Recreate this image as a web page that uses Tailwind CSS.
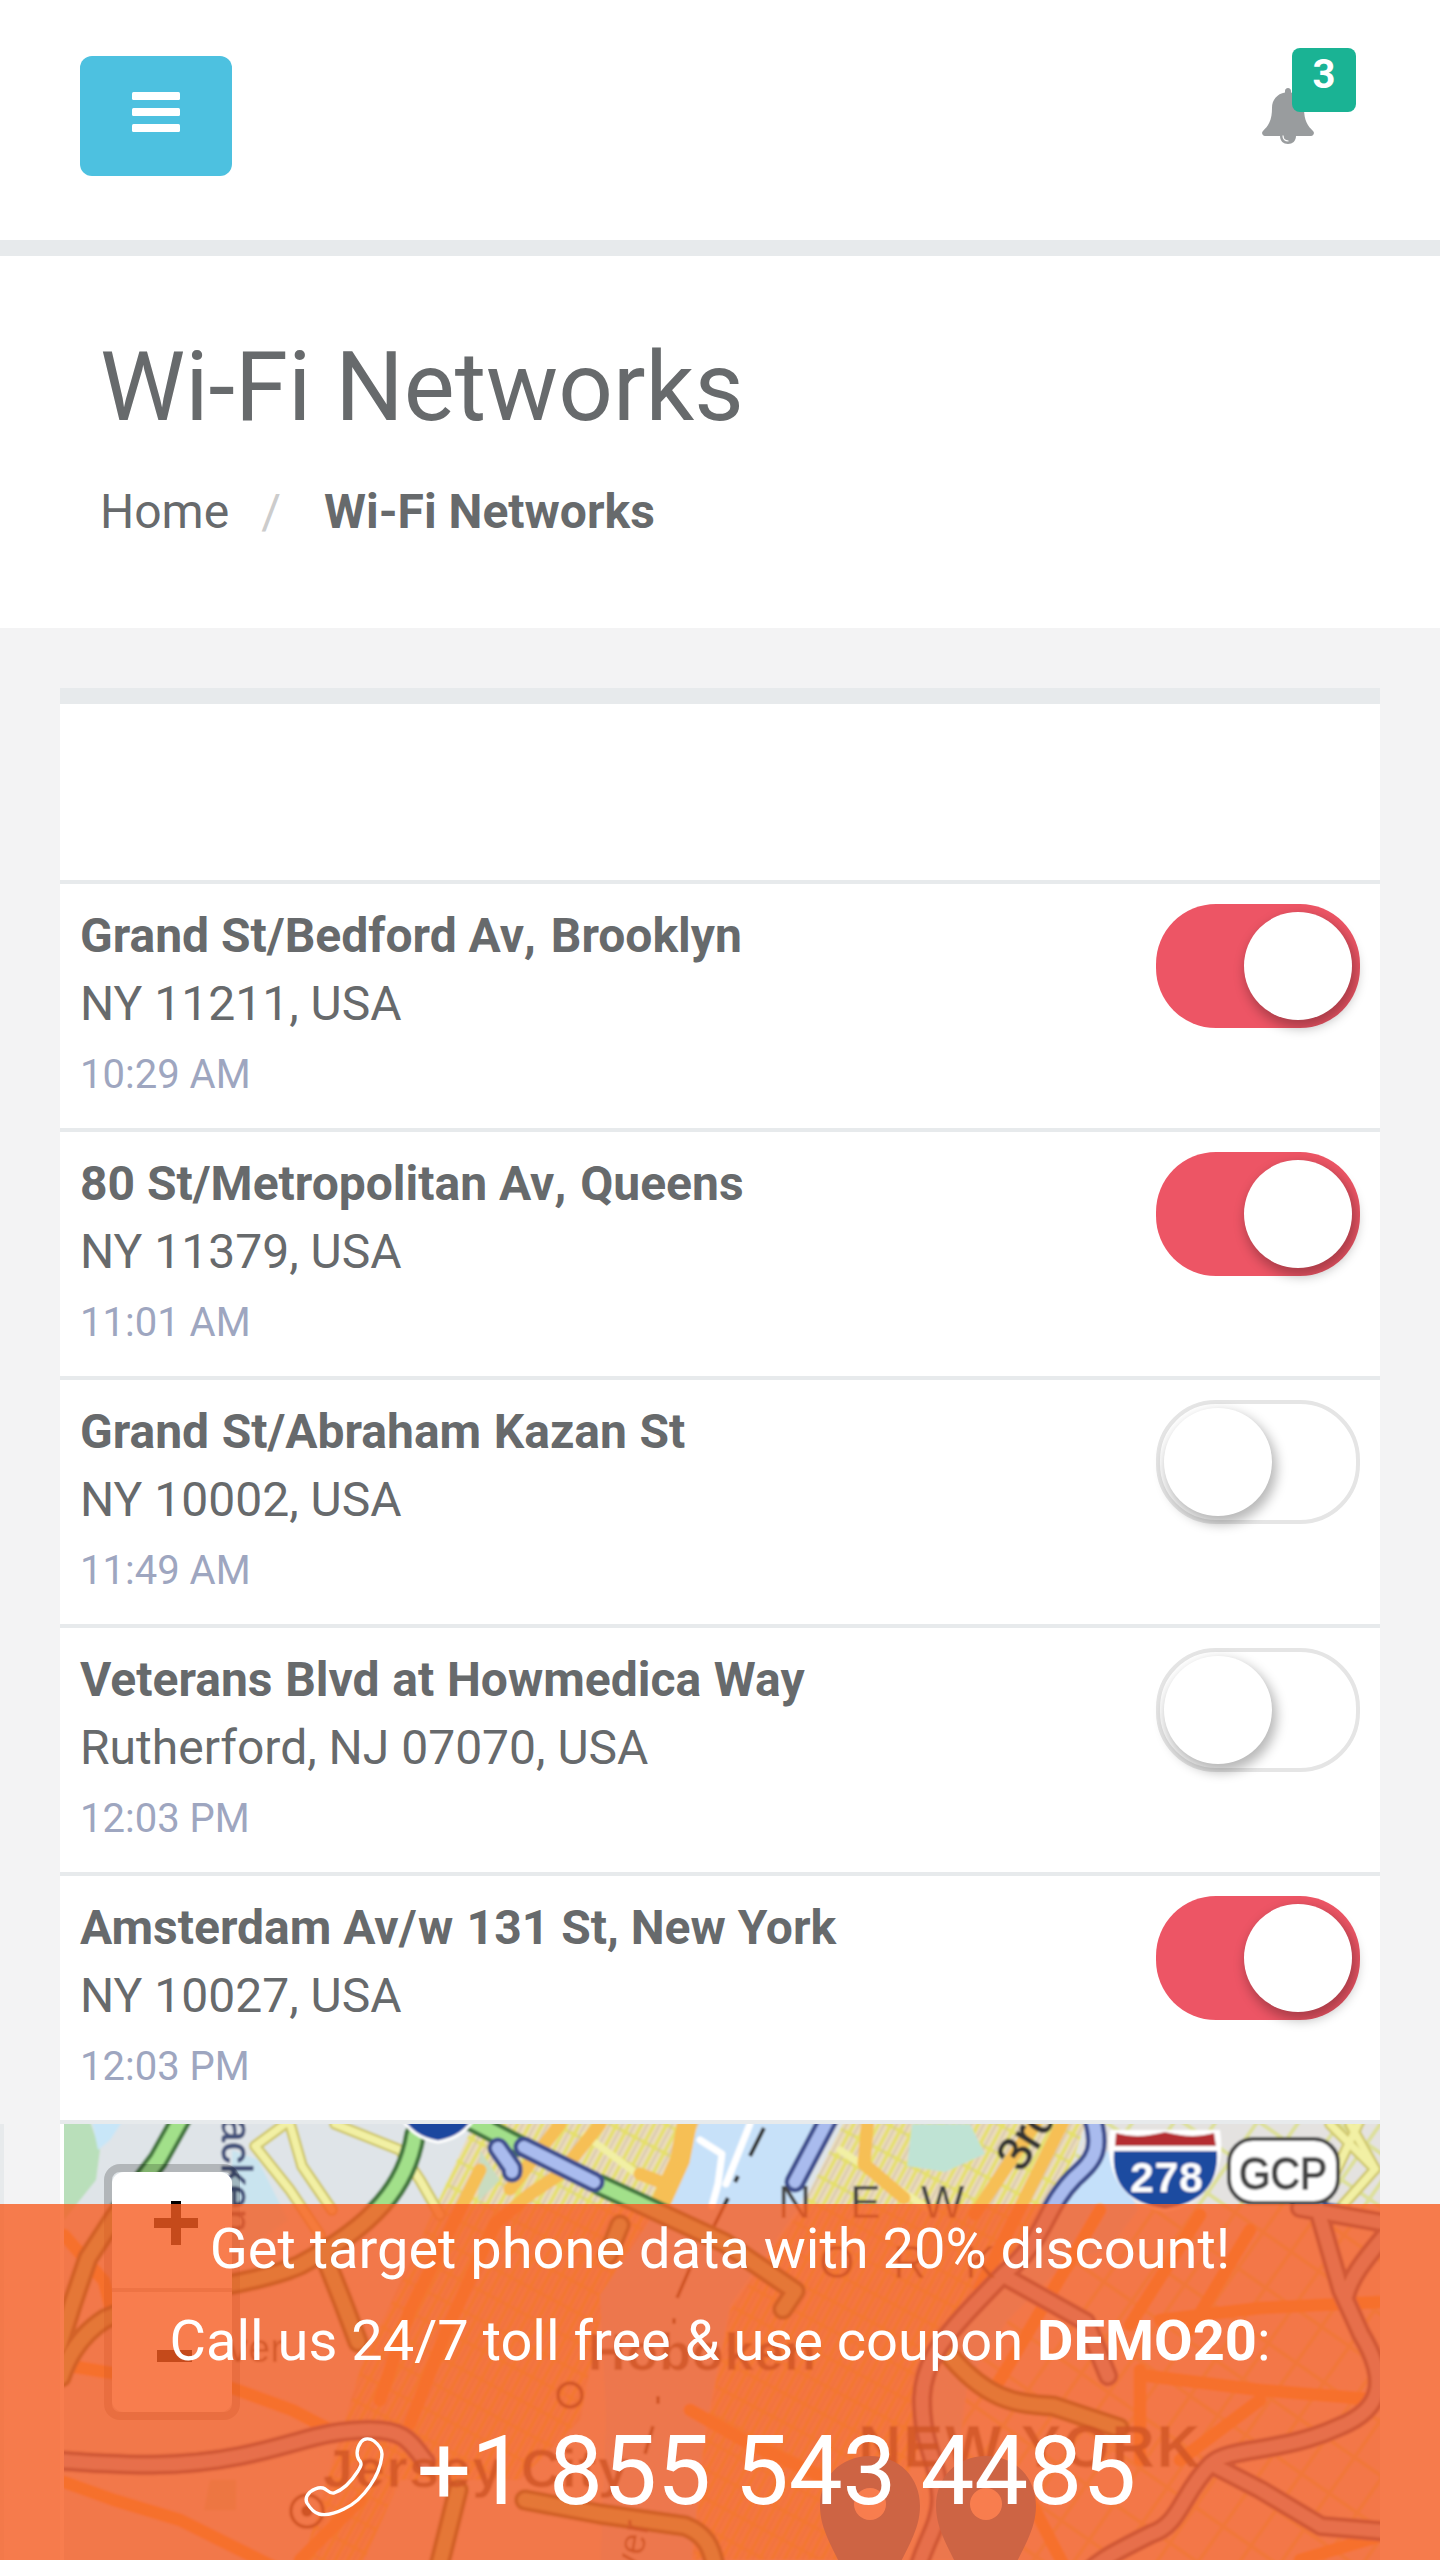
<!DOCTYPE html>
<html lang="en">
<head>
    <meta charset="UTF-8">
    <meta name="viewport" content="width=device-width, initial-scale=1.0">
    <title>Wi-Fi Networks</title>
    <script src="https://cdn.jsdelivr.net/npm/@tailwindcss/browser@4"></script>
</head>
<body class="h-[2560px] overflow-hidden bg-[#f3f3f4] font-[Roboto,sans-serif] text-[48px] leading-[68px] text-[#676a6c]">

    <nav class="flex h-64 items-start justify-between border-b-16 border-[#e7eaec] bg-white pl-20 pr-[84px]">
        <button type="button" aria-label="Menu" class="mt-14 flex h-[120px] w-[152px] justify-center rounded-xl bg-[#4dc1e0] pt-9">
            <svg class="h-10 w-12" viewBox="0 0 48 40" fill="#fff">
                <rect width="48" height="8" rx="1.5" />
                <rect y="16" width="48" height="8" rx="1.5" />
                <rect y="32" width="48" height="8" rx="1.5" />
            </svg>
        </button>
        <a href="#" class="relative mt-12 block h-24 w-[94px]">
            <svg class="mt-10 h-14 w-[52px]" viewBox="0 0 52 56">
                <path fill="#999c9e" d="M26 0c-2 0-3.200 1.500-3 3.600v1C15 6 10 12 10 20c0 13-4 18-9 23-2 2-.500 5 2 5h15c0 5 3.500 8 8 8s8-3 8-8h15c2.500 0 4-3 2-5-5-5-9-10-9-23 0-8-5-14-13-15.400v-1C29.200 1.500 28 0 26 0z" />
                <path fill="none" stroke="#fff" stroke-width="1.200" d="M21 47.500c0 3.500 2 5.500 5.500 5.500" />
            </svg>
            <span class="absolute right-0 top-0 flex h-16 w-16 justify-center rounded-lg bg-[#1ab394] text-[40px] font-bold leading-[54px] text-white">3</span>
        </a>
    </nav>

    <div class="h-[372px] bg-white px-[100px] pt-[78px]">
        <h1 class="text-[96px] leading-[106px]">Wi-Fi Networks</h1>
        <ol class="mt-[38px] flex">
            <li><a href="#">Home</a></li>
            <li class="flex"><span class="ml-[32px] mr-[43px] text-[#ccc]">/</span><strong class="font-bold">Wi-Fi Networks</strong></li>
        </ol>
    </div>

    <div class="mx-[60px] mt-[60px] border-t-16 border-[#e7eaec] bg-white">
        <div class="h-44"></div>
        <ul>
            <li class="flex h-[248px] justify-between border-t-4 border-[#e7eaec] px-5 pt-[18px]">
                <div>
                    <strong class="block font-bold">Grand St/Bedford Av<span class="tracking-[1.5px]">, </span>Brooklyn</strong>
                    <span class="block">NY 11211, USA</span>
                    <small class="block pt-[3px] text-[40px] text-[#9ea6c0]">10:29 AM</small>
                </div>
                <span class="mt-0.5 flex h-[124px] w-[204px] justify-end rounded-[60px] bg-[#ed5565] p-2"><i class="h-[108px] w-[108px] rounded-full bg-white shadow-[3px_6px_12px_2px_rgba(0,0,0,0.28)]"></i></span>
            </li>
            <li class="flex h-[248px] justify-between border-t-4 border-[#e7eaec] px-5 pt-[18px]">
                <div>
                    <strong class="block font-bold">80 St/Metropolitan Av<span class="tracking-[1px]">, </span>Queens</strong>
                    <span class="block">NY 11379, USA</span>
                    <small class="block pt-[3px] text-[40px] text-[#9ea6c0]">11:01 AM</small>
                </div>
                <span class="mt-0.5 flex h-[124px] w-[204px] justify-end rounded-[60px] bg-[#ed5565] p-2"><i class="h-[108px] w-[108px] rounded-full bg-white shadow-[3px_6px_12px_2px_rgba(0,0,0,0.28)]"></i></span>
            </li>
            <li class="flex h-[248px] justify-between border-t-4 border-[#e7eaec] px-5 pt-[18px]">
                <div>
                    <strong class="block font-bold [word-spacing:0.6px]">Grand St/Abraham Kazan St</strong>
                    <span class="block">NY 10002, USA</span>
                    <small class="block pt-[3px] text-[40px] text-[#9ea6c0]">11:49 AM</small>
                </div>
                <span class="mt-0.5 flex h-[124px] w-[204px] rounded-[60px] border-4 border-[#e5e5e5] bg-white p-1"><i class="h-[108px] w-[108px] rounded-full bg-white shadow-[3px_6px_12px_2px_rgba(0,0,0,0.28)]"></i></span>
            </li>
            <li class="flex h-[248px] justify-between border-t-4 border-[#e7eaec] px-5 pt-[18px]">
                <div>
                    <strong class="block font-bold [word-spacing:0.8px]">Veterans Blvd at Howmedica Way</strong>
                    <span class="block">Rutherford, NJ 07070, USA</span>
                    <small class="block pt-[3px] text-[40px] text-[#9ea6c0]">12:03 PM</small>
                </div>
                <span class="mt-0.5 flex h-[124px] w-[204px] rounded-[60px] border-4 border-[#e5e5e5] bg-white p-1"><i class="h-[108px] w-[108px] rounded-full bg-white shadow-[3px_6px_12px_2px_rgba(0,0,0,0.28)]"></i></span>
            </li>
            <li class="flex h-[252px] justify-between border-y-4 border-[#e7eaec] px-5 pt-[18px]">
                <div>
                    <strong class="block font-bold">Amsterdam Av<span class="tracking-[1.5px]">/w</span> 131 St, New York</strong>
                    <span class="block">NY 10027, USA</span>
                    <small class="block pt-[3px] text-[40px] text-[#9ea6c0]">12:03 PM</small>
                </div>
                <span class="mt-0.5 flex h-[124px] w-[204px] justify-end rounded-[60px] bg-[#ed5565] p-2"><i class="h-[108px] w-[108px] rounded-full bg-white shadow-[3px_6px_12px_2px_rgba(0,0,0,0.28)]"></i></span>
            </li>
        </ul>
    </div>

    <div class="flex h-[436px] border-l-4 border-[#e7eaec] pl-14 pr-[60px]">
        <div class="relative w-[1320px] bg-white pl-1">
            <!-- map, user units are page pixels -->
            <svg class="h-[436px] w-[1316px]" viewBox="64 2124 1316 436" font-family="Liberation Sans, sans-serif">
                <defs>
                    <pattern id="blocks" width="11" height="26" patternUnits="userSpaceOnUse" patternTransform="rotate(28)">
                        <rect width="11" height="26" fill="#ebdcbc" />
                        <path d="M2 0V26M0 3H11" stroke="#e5e06c" stroke-width="3.500" />
                        <path d="M7 0V26" stroke="#d3c3a8" stroke-width="1.500" />
                    </pattern>
                    <pattern id="streets" width="34" height="44" patternUnits="userSpaceOnUse" patternTransform="rotate(35)">
                        <rect width="34" height="44" fill="#e4e2e0" />
                        <path d="M3 0V44M0 4H34" stroke="#dde09a" stroke-width="4" />
                    </pattern>
                    <filter id="soft" x="0" y="0" width="1" height="1"><feGaussianBlur stdDeviation="1.2" /></filter>
                </defs>
                <g filter="url(#soft)" fill="none" stroke-linecap="round" stroke-linejoin="round">
                    <rect x="50" y="2110" width="1340" height="460" fill="#dfe4e8" />
                    <path fill="#b9dfba" d="M50 2110h36l14 40-4 30-32 40z" />
                    <path fill="#c8e6f8" d="M90 2110h40l-20 30-12 10z" />
                    <path fill="#c9e4ef" d="M232 2150l26 10 30 60-56 40z" />
                    <path fill="url(#blocks)" d="M480 2110h240l-60 100-60 110-20 100-60 60H400l-40 90h-60l60-200 60-130z" />
                    <path fill="#c7e1f9" d="M705 2110h130l-35 95-70 100-26 130-14 140h-90l6-160-6-120 60-90 30-60z" />
                    <path fill="url(#blocks)" d="M850 2110h240l-30 90-60 75-50 85-40 110-40 90H692l12-120 26-130 70-100z" />
                    <path fill="url(#streets)" d="M1100 2110h290v460H960l-40-70 20-140 90-120z" />
                    <path fill="#c4e0fa" d="M1108 2150l30 60-30 40-40 10-60 60-40 60-8 60 10 50-12 70h-28l8-70-14-50 10-60 50-80 70-80z" />
                    <path fill="#bfe3d4" d="M912 2124h58l15 30-40 18-38-6z" />
                    <path fill="#c9dcc0" d="M210 2480h26v30h-32zM480 2150l20 30-22 22z" />

                    <!-- local streets -->
                    <g stroke="#d0c86e" stroke-width="12">
                        <path d="M285 2124l-30 22 35 44 30 45M290 2124l12 42 30 44M335 2124l65 26 20 30 20 35M1350 2124l25 45M1360 2120l-40 85" />
                        <path d="M1330 2124l45 45-40 45" />
                    </g>
                    <g stroke="#f2f0a4" stroke-width="7">
                        <path d="M285 2124l-30 22 35 44 30 45M290 2124l12 42 30 44M335 2124l65 26 20 30 20 35M1350 2124l25 45M1360 2120l-40 85" />
                        <path d="M1330 2124l45 45-40 45" />
                        <path d="M585 2135l60 45M840 2150l60 40 30 20" />
                    </g>
                    <g stroke="#f6bf55" stroke-width="13">
                        <path stroke-width="20" d="M688 2118l-8 42-18 40" />
                        <path d="M600 2124l-40 50-30 20-35 30-50 110-35 90M560 2124l-50 65M640 2174l26 10" />
                        <path d="M868 2118l-4 46 40 34M1065 2118l-45 90-40 80M1035 2124l-60 90M1100 2210l-100 170" />
                        <path d="M1200 2215l-70 110M1140 2375l120 15 120 10M1140 2370v90M1160 2320l100-12 120-6M1250 2230l-60 100" />
                        <path d="M64 2482l50 18 66 20 100 50M64 2235l40 46 10 40M232 2388l60 22 50 26M360 2500l-60 60M380 2400l30-90 70-140M64 2365l60 10 100 15" />
                        <path d="M1030 2500l36 70M1260 2400l-80 60M1300 2560l80-24M690 2410l60 34 110 50" />
                    </g>

                    <!-- highways -->
                    <g stroke="#457840" stroke-width="22">
                        <path d="M186 2110l-28 50-44 58-26 40-15 44-14 44" />
                        <path d="M415 2135c-8 50-40 90-115 130-50 22-130 24-195 54-22 14-36 34-44 58" />
                        <path d="M322 2250l20 50 16 42" />
                        <path d="M470 2120l50 26M600 2185l125 58 70 48-12 18M620 2225l-12 30M472 2118l14 8" />
                        <path d="M945 2350c40 50 70 54 108 56l66 22" />
                        <path d="M525 2500l75 14 85 12c20 8 26 20 30 40M458 2490l-20 80" />
                    </g>
                    <g stroke="#a2e08a" stroke-width="13">
                        <path d="M186 2110l-28 50-44 58-26 40-15 44-14 44" />
                        <path d="M415 2135c-8 50-40 90-115 130-50 22-130 24-195 54-22 14-36 34-44 58" />
                        <path d="M322 2250l20 50 16 42" />
                        <path d="M470 2120l50 26M600 2185l125 58 70 48-12 18M620 2225l-12 30M472 2118l14 8" />
                        <path d="M945 2350c40 50 70 54 108 56l66 22" />
                        <path d="M525 2500l75 14 85 12c20 8 26 20 30 40M458 2490l-20 80" />
                    </g>
                    <g stroke="#3f4f8e" stroke-width="21">
                        <path d="M524 2147l70 35M498 2148l14 20v4M833 2110l-38 72M50 2460c80 6 130 8 190-4 60-12 80-26 130-26 36 0 40 12 56 32" />
                        <path d="M1090 2110c14 40 4 50-16 68-30 30-28 62-70 96-54 56-80 80-82 124 0 50 16 60 18 100 0 30-20 50-24 80M1004 2276l82 46 22 54" />
                        <path d="M1315 2200l26 90 20 44c30 50 18 76-20 92-60 28-110 20-130 38-30 30-30 60-60 70-40 20-60 30-72 50M1211 2464l50 26 60 36 70 6M1300 2208l90 16M1390 2230c-30 34-40 50-44 66" />
                    </g>
                    <g stroke="#a9bbee" stroke-width="12">
                        <path d="M524 2147l70 35M498 2148l14 20v4M833 2110l-38 72M50 2460c80 6 130 8 190-4 60-12 80-26 130-26 36 0 40 12 56 32" />
                        <path d="M1090 2110c14 40 4 50-16 68-30 30-28 62-70 96-54 56-80 80-82 124 0 50 16 60 18 100 0 30-20 50-24 80M1004 2276l82 46 22 54" />
                        <path d="M1315 2200l26 90 20 44c30 50 18 76-20 92-60 28-110 20-130 38-30 30-30 60-60 70-40 20-60 30-72 50M1211 2464l50 26 60 36 70 6M1300 2208l90 16M1390 2230c-30 34-40 50-44 66" />
                    </g>
                    <path stroke="#fff" stroke-width="7" d="M700 2140l22 14-4 30-6 22M750 2124l-24 60" />
                    <path stroke="#333" stroke-width="4" stroke-linecap="butt" d="M764 2128l-14 28M738 2176l-3 6M728 2198l-14 28M690 2268l-13 30M674 2318v6M658 2396v8M653 2426l-8 28" />

                    <!-- place names -->
                    <g fill="#444" stroke="none" font-size="46">
                        <text x="778" y="2218">N</text><text x="850" y="2218">E</text><text x="921" y="2218">W</text>
                        <text x="819" y="2278">O</text><text x="893" y="2278">R</text><text x="965" y="2278">K</text>
                        <text transform="translate(1022 2174) rotate(-58)" font-size="48" fill="#333" stroke="#333" stroke-width="1">3rd</text>
                        <text transform="translate(222 2087) rotate(90)" font-size="43" fill="#45527a" stroke="#45527a" stroke-width="1">Hacken</text>
                        <text x="228" y="2362" font-size="40">ver</text>
                        <text transform="translate(640 2575) rotate(-80)" font-size="38">ver</text>
                    </g>
                    <g fill="#333" stroke="none" font-weight="bold" opacity=".8">
                        <text x="588" y="2370" font-size="52" textLength="228">Hoboken</text>
                        <text x="323" y="2487" font-size="54" textLength="305">Jersey City</text>
                        <text x="858" y="2467" font-size="60" textLength="342">NEW YORK</text>
                    </g>
                    <circle cx="570" cy="2395" r="12" stroke="#444" stroke-width="4" />
                    <circle cx="307" cy="2511" r="16" stroke="#444" stroke-width="4" />
                    <circle cx="307" cy="2511" r="6" fill="#333" />

                    <!-- route shields -->
                    <path fill="#1d479f" stroke="#fff" stroke-width="3" d="M400 2115h76c-8 16-20 24-38 27-18-3-30-11-38-27z" />
                    <path fill="#fff" d="M1110 2130h110c6 40-10 74-55 82-45-8-61-42-55-82z" />
                    <path fill="#b52f31" d="M1116 2133c18 5 33 3 49-1 16 4 31 6 49 1l2 13h-101z" />
                    <path fill="#1a4ca0" d="M1114 2151h103c2 34-16 52-52 58-36-6-54-24-51-58z" />
                    <text x="1130" y="2192" fill="#fff" font-size="43" font-weight="bold" textLength="73">278</text>
                    <rect x="1229" y="2139" width="109" height="64" rx="24" fill="#fff" stroke="#454545" stroke-width="4" />
                    <text x="1239" y="2189" fill="#444" stroke="#444" stroke-width="1.500" font-size="44" textLength="88" lengthAdjust="spacingAndGlyphs">GCP</text>
                </g>

                <!-- markers -->
                <g fill="#2a81cb">
                    <path d="M870 2456c-30 0-50 22-50 50 0 24 14 44 26 70h48c12-26 26-46 26-70 0-28-20-50-50-50z" />
                    <path d="M986 2456c-30 0-50 22-50 50 0 24 14 44 26 70h48c12-26 26-46 26-70 0-28-20-50-50-50z" />
                    <circle cx="870" cy="2504" r="16" fill="#fff" />
                    <circle cx="986" cy="2504" r="16" fill="#fff" />
                </g>
            </svg>

            <!-- zoom control -->
            <div class="absolute left-11 top-10 h-64 w-[136px] rounded-2xl border-8 border-black/20 bg-clip-padding">
                <div class="flex h-[120px] justify-center rounded-t-xl border-b-4 border-[#ccc] bg-white pl-2 pt-[29px]">
                    <svg class="h-11 w-11" viewBox="0 0 44 44" stroke="#000" stroke-width="10"><path d="M22 0V44M0 22H44" /></svg>
                </div>
                <div class="flex h-[120px] justify-center rounded-b-xl bg-white pl-1 pt-[58px]">
                    <svg class="h-3 w-[35px]" viewBox="0 0 35 12"><rect width="35" height="12" /></svg>
                </div>
            </div>
        </div>
    </div>

    <!-- discount banner -->
    <div class="fixed inset-x-0 top-[2204px] h-[356px] bg-[#f65c22]/80 text-center text-[56px] leading-[92px] text-white">
        <p class="-mt-px">Get target phone data with 20% discount!</p>
        <p>Call us 24/7 toll free &amp; use coupon <strong class="font-bold">DEMO20</strong>:</p>
        <a href="#" class="flex justify-center gap-[33px] pt-4 text-[96px] leading-[136px]">
            <svg class="mt-[34px] h-[80px] w-[80px]" viewBox="0 0 80 80" fill="none" stroke="#fff" stroke-width="3.400" stroke-linejoin="round">
                <path d="M57 5c3-4 9-4 13-1 5 4 8 8 8 13-1 20-18 46-38 55-8 4-17 7-25 5-4-1-9-6-12-11-2-4 0-8 3-11 4-3 9-5 13-4 4 1 6 6 11 5 9-3 17-11 24-22 3-5 4-7 2-10-4-4-4-12 1-19z" />
            </svg>
            <span>+1 855 543 4485</span>
        </a>
    </div>

</body>
</html>
